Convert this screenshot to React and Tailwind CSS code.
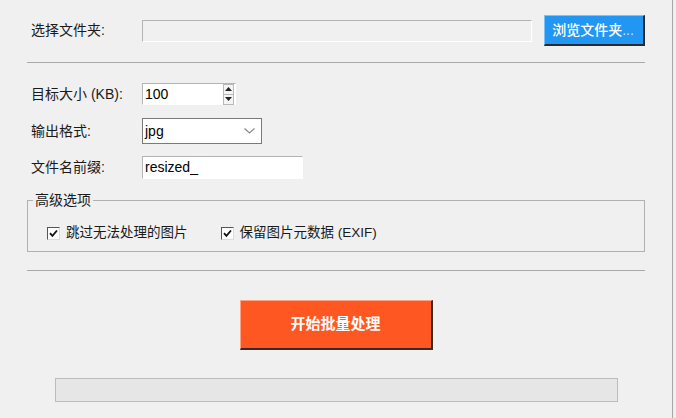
import React from "react";

const font = { fontFamily: '"Liberation Sans", "Noto Sans CJK SC", sans-serif' };

function Checkbox({ label }) {
  return (
    <label className="flex items-center gap-[6px] text-[13.5px] text-[#1a1a1a]">
      <span className="w-[13px] h-[13px] bg-white border border-t-[#555] border-l-[#555] border-b-[#dcdcdc] border-r-[#dcdcdc] flex items-center justify-center">
        <svg width="9" height="9" viewBox="0 0 9 9">
          <path d="M1 4.2 L3.4 6.8 L8 1.5" fill="none" stroke="#111" strokeWidth="1.8" />
        </svg>
      </span>
      {label}
    </label>
  );
}

export default function App() {
  return (
    <div className="w-[676px] h-[418px] bg-[#f0f0f0] flex overflow-hidden" style={font}>
      <div className="w-[673px] h-full border-r border-[#a8a8a8] flex flex-col pl-[27px] pr-[27px]">
        {/* folder row */}
        <div className="mt-[15px] h-[31px] flex items-center">
          <span className="w-[115px] pl-[4px] text-[14px] text-[#1a1a1a]">选择文件夹:</span>
          <div className="w-[391px] h-[22px] bg-[#f0f0f0] border border-t-[#b4b4b4] border-l-[#b4b4b4] border-b-white border-r-white" />
          <button className="ml-[12px] w-[101px] h-[31px] bg-[#2196f3] text-white text-[14px] font-medium border-t border-l border-t-[#7cc2fa] border-l-[#7cc2fa] border-b-2 border-r-2 border-b-[#2a2a2a] border-r-[#2a2a2a] text-left pl-[7px] whitespace-nowrap">
            浏览文件夹<span className="text-[#cfe6fb]">...</span>
          </button>
        </div>

        <div className="mt-[16px] w-[618px] h-px bg-[#a9a9a9]" />

        {/* size */}
        <div className="mt-[20px] h-[22px] flex items-center">
          <span className="w-[115px] pl-[4px] text-[14px] text-[#1a1a1a]">目标大小 (KB):</span>
          <div className="w-[94px] h-[22px] bg-white border border-t-[#b4b4b4] border-l-[#b4b4b4] border-b-white border-r-white flex items-center">
            <span className="flex-1 pl-[2px] text-[14px] text-black">100</span>
            <div className="w-[11px] h-[21px] mr-[1px] flex flex-col border border-[#b8b8b8] bg-[#f4f4f4]">
              <div className="flex-1 flex items-center justify-center border-b border-[#b8b8b8]">
                <svg width="7" height="4" viewBox="0 0 7 4"><path d="M0 4 L3.5 0 L7 4 Z" fill="#222" /></svg>
              </div>
              <div className="flex-1 flex items-center justify-center">
                <svg width="7" height="4" viewBox="0 0 7 4"><path d="M0 0 L3.5 4 L7 0 Z" fill="#222" /></svg>
              </div>
            </div>
          </div>
        </div>

        {/* format */}
        <div className="mt-[13px] h-[26px] flex items-center">
          <span className="w-[115px] pl-[4px] text-[14px] text-[#1a1a1a]">输出格式:</span>
          <div className="w-[120px] h-[26px] bg-white border border-[#7a7a7a] flex items-center">
            <span className="flex-1 pl-[2px] text-[14px] text-black">jpg</span>
            <svg className="mr-[6px]" width="11" height="6" viewBox="0 0 11 6">
              <path d="M0.5 0.5 L5.5 5 L10.5 0.5" fill="none" stroke="#8a8a8a" strokeWidth="1.2" />
            </svg>
          </div>
        </div>

        {/* prefix */}
        <div className="mt-[12px] h-[23px] flex items-center">
          <span className="w-[115px] pl-[4px] text-[14px] text-[#1a1a1a]">文件名前缀:</span>
          <div className="w-[161px] h-[23px] bg-white border border-t-[#b4b4b4] border-l-[#b4b4b4] border-b-white border-r-white flex items-center">
            <span className="pl-[2px] text-[14px] text-black">resized_</span>
          </div>
        </div>

        {/* advanced */}
        <fieldset className="mt-[14px] w-[618px] h-[59px] border border-[#b0b0b0] p-0">
          <legend className="ml-[5px] px-[2px] text-[14px] text-[#1a1a1a] leading-[15px]">高级选项</legend>
          <div className="mt-[15px] pl-[19px] flex items-center gap-[33px]">
            <Checkbox label="跳过无法处理的图片" />
            <Checkbox label="保留图片元数据 (EXIF)" />
          </div>
        </fieldset>

        <div className="mt-[18px] w-[618px] h-px bg-[#a9a9a9]" />

        {/* start */}
        <div className="mt-[29px] w-[618px] flex justify-center">
          <button className="w-[193px] h-[50px] bg-[#ff5722] text-white text-[15px] font-semibold border-t border-l border-t-[#ffa27f] border-l-[#ffa27f] border-b-2 border-r-2 border-b-[#3a2a24] border-r-[#3a2a24]">
            开始批量处理
          </button>
        </div>

        {/* progress */}
        <div className="mt-[28px] ml-[28px] w-[563px] h-[24px] bg-[#e6e6e6] border border-[#bcbcbc]" />
      </div>
    </div>
  );
}
